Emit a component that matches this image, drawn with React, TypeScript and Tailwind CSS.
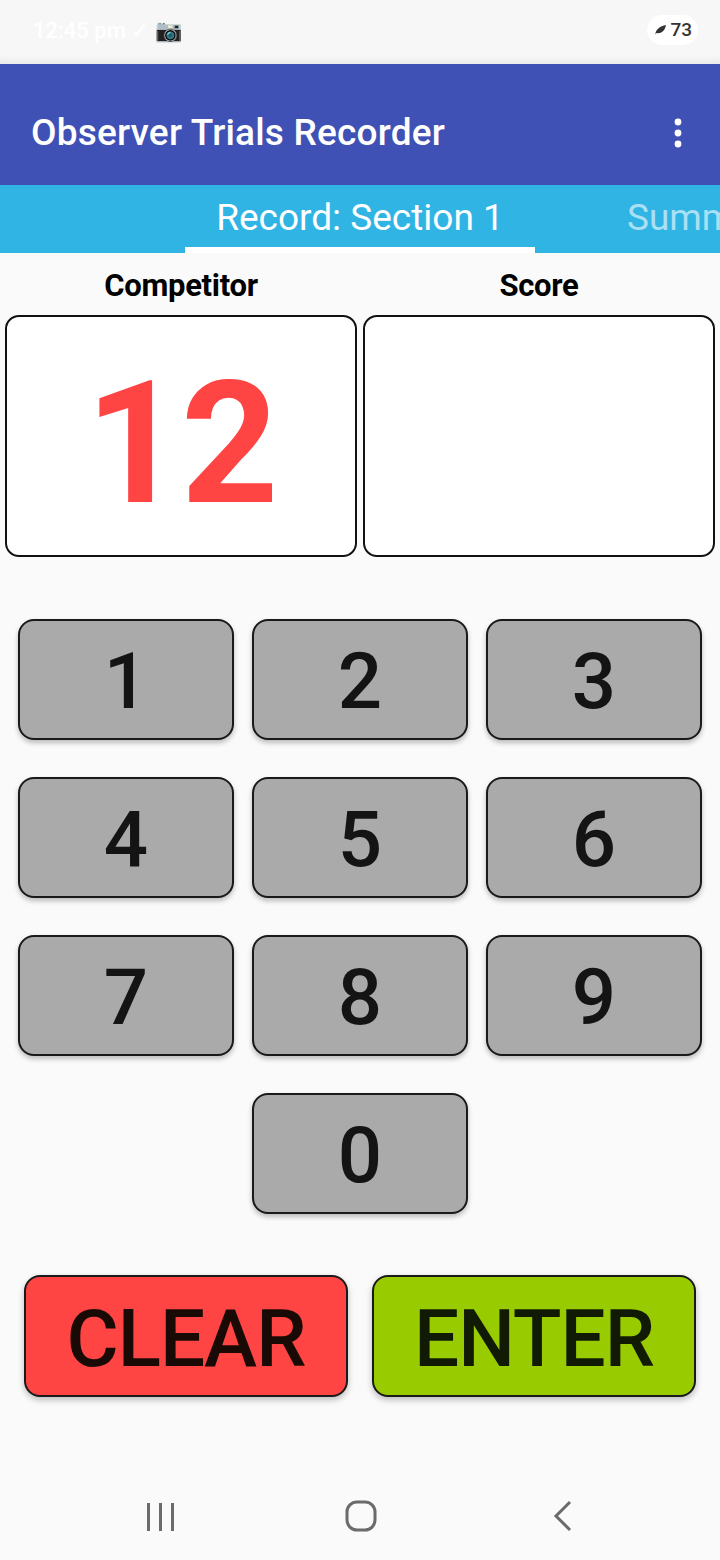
import React from "react";

const font = { fontFamily: "Roboto, 'Noto Sans', sans-serif" };

function Key({ label }: { label: string }) {
  return (
    <button className="flex h-[121px] w-[216px] items-center justify-center rounded-[16px] border-2 border-[#1a1a1a] bg-[#aaaaaa] pt-[4px] text-[78px] font-medium leading-none text-[#141414] shadow-[0_3px_5px_rgba(0,0,0,0.25)]">
      {label}
    </button>
  );
}

export default function App() {
  return (
    <div className="flex h-[1560px] w-[720px] flex-col overflow-hidden bg-[#fafafa]" style={font}>
      {/* status bar */}
      <div className="flex h-[64px] items-center justify-between bg-[#f7f7f7] pl-[33px] pr-[22px] pb-[4px] shadow-[inset_0_-8px_8px_-6px_rgba(0,0,0,0.08)]">
        <span className="text-[22px] font-medium text-white">12:45 pm ✓ 📷</span>
        <div className="flex items-center gap-[3px] rounded-full bg-white px-[6px] py-[1px]">
          <svg width="14" height="12" viewBox="0 0 14 12">
            <path d="M2 11 C3 5 7 2 13 1 C12 7 8 10 3 9 Z" fill="#333" />
          </svg>
          <span className="text-[19px] font-medium text-[#333]">73</span>
        </div>
      </div>

      {/* app bar */}
      <div className="flex h-[121px] items-center justify-between bg-[#3f51b5] pl-[31px] pr-[36px] pt-[16px]">
        <h1 className="text-[37px] font-medium leading-none tracking-[0.2px] text-white">Observer Trials Recorder</h1>
        <svg width="12" height="32" viewBox="0 0 12 32">
          <circle cx="6" cy="5" r="3.4" fill="white" />
          <circle cx="6" cy="16" r="3.4" fill="white" />
          <circle cx="6" cy="27" r="3.4" fill="white" />
        </svg>
      </div>

      {/* tabs */}
      <div className="flex h-[68px] overflow-hidden bg-[#2fb4e4] pl-[185px]">
        <div className="flex w-[350px] shrink-0 flex-col">
          <div className="flex flex-1 items-center justify-center pt-[4px] text-[37px] text-white">Record: Section 1</div>
          <div className="h-[6px] bg-white" />
        </div>
        <div className="flex shrink-0 items-center pl-[92px] pt-[4px] pb-[6px] text-[37px] whitespace-nowrap text-white/60">
          Summ
        </div>
      </div>

      {/* display */}
      <div className="grid grid-cols-2 gap-[6px] px-[5px] pt-[14px]">
        <div className="flex flex-col">
          <div className="h-[48px] text-center text-[31px] font-bold leading-[38px] tracking-[-0.3px] text-black">Competitor</div>
          <div className="flex h-[242px] items-center justify-center rounded-[14px] border-2 border-[#111] bg-white pt-[16px]">
            <span className="text-[170px] font-bold leading-none tracking-[-2px] text-[#ff4444]">12</span>
          </div>
        </div>
        <div className="flex flex-col">
          <div className="h-[48px] text-center text-[31px] font-bold leading-[38px] tracking-[-0.3px] text-black">Score</div>
          <div className="h-[242px] rounded-[14px] border-2 border-[#111] bg-white" />
        </div>
      </div>

      {/* keypad */}
      <div className="mt-[62px] grid grid-cols-[216px_216px_216px] gap-x-[18px] gap-y-[37px] px-[18px]">
        {["1", "2", "3", "4", "5", "6", "7", "8", "9"].map((k) => (
          <Key key={k} label={k} />
        ))}
        <div />
        <Key label="0" />
      </div>

      {/* actions */}
      <div className="mt-[61px] grid grid-cols-2 gap-[24px] px-[24px]">
        <button className="flex h-[122px] items-center justify-center rounded-[16px] border-2 border-[#1a1a1a] bg-[#ff4444] pt-[6px] text-[80px] font-medium leading-none tracking-[-1px] text-[#1a0a05] shadow-[0_3px_6px_rgba(0,0,0,0.25)]">
          CLEAR
        </button>
        <button className="flex h-[122px] items-center justify-center rounded-[16px] border-2 border-[#1a1a1a] bg-[#99cc00] pt-[6px] text-[80px] font-medium leading-none tracking-[-1px] text-[#101a05] shadow-[0_3px_6px_rgba(0,0,0,0.25)]">
          ENTER
        </button>
      </div>

      {/* nav bar */}
      <div className="mt-auto flex h-[60px] items-start pl-[145px]">
        <svg width="32" height="32" viewBox="0 0 32 32" className="mt-[1px]">
          <path d="M3.5 2v28M15.5 2v28M27.5 2v28" stroke="#6b6b6b" strokeWidth="3" />
        </svg>
        <svg width="34" height="34" viewBox="0 0 34 34" className="ml-[168px]">
          <rect x="2" y="2" width="28" height="28" rx="10" fill="none" stroke="#6b6b6b" strokeWidth="3" />
        </svg>
        <svg width="24" height="34" viewBox="0 0 24 34" className="ml-[172px]">
          <path d="M19 2L5 16l14 14" fill="none" stroke="#6b6b6b" strokeWidth="3" />
        </svg>
      </div>
    </div>
  );
}
